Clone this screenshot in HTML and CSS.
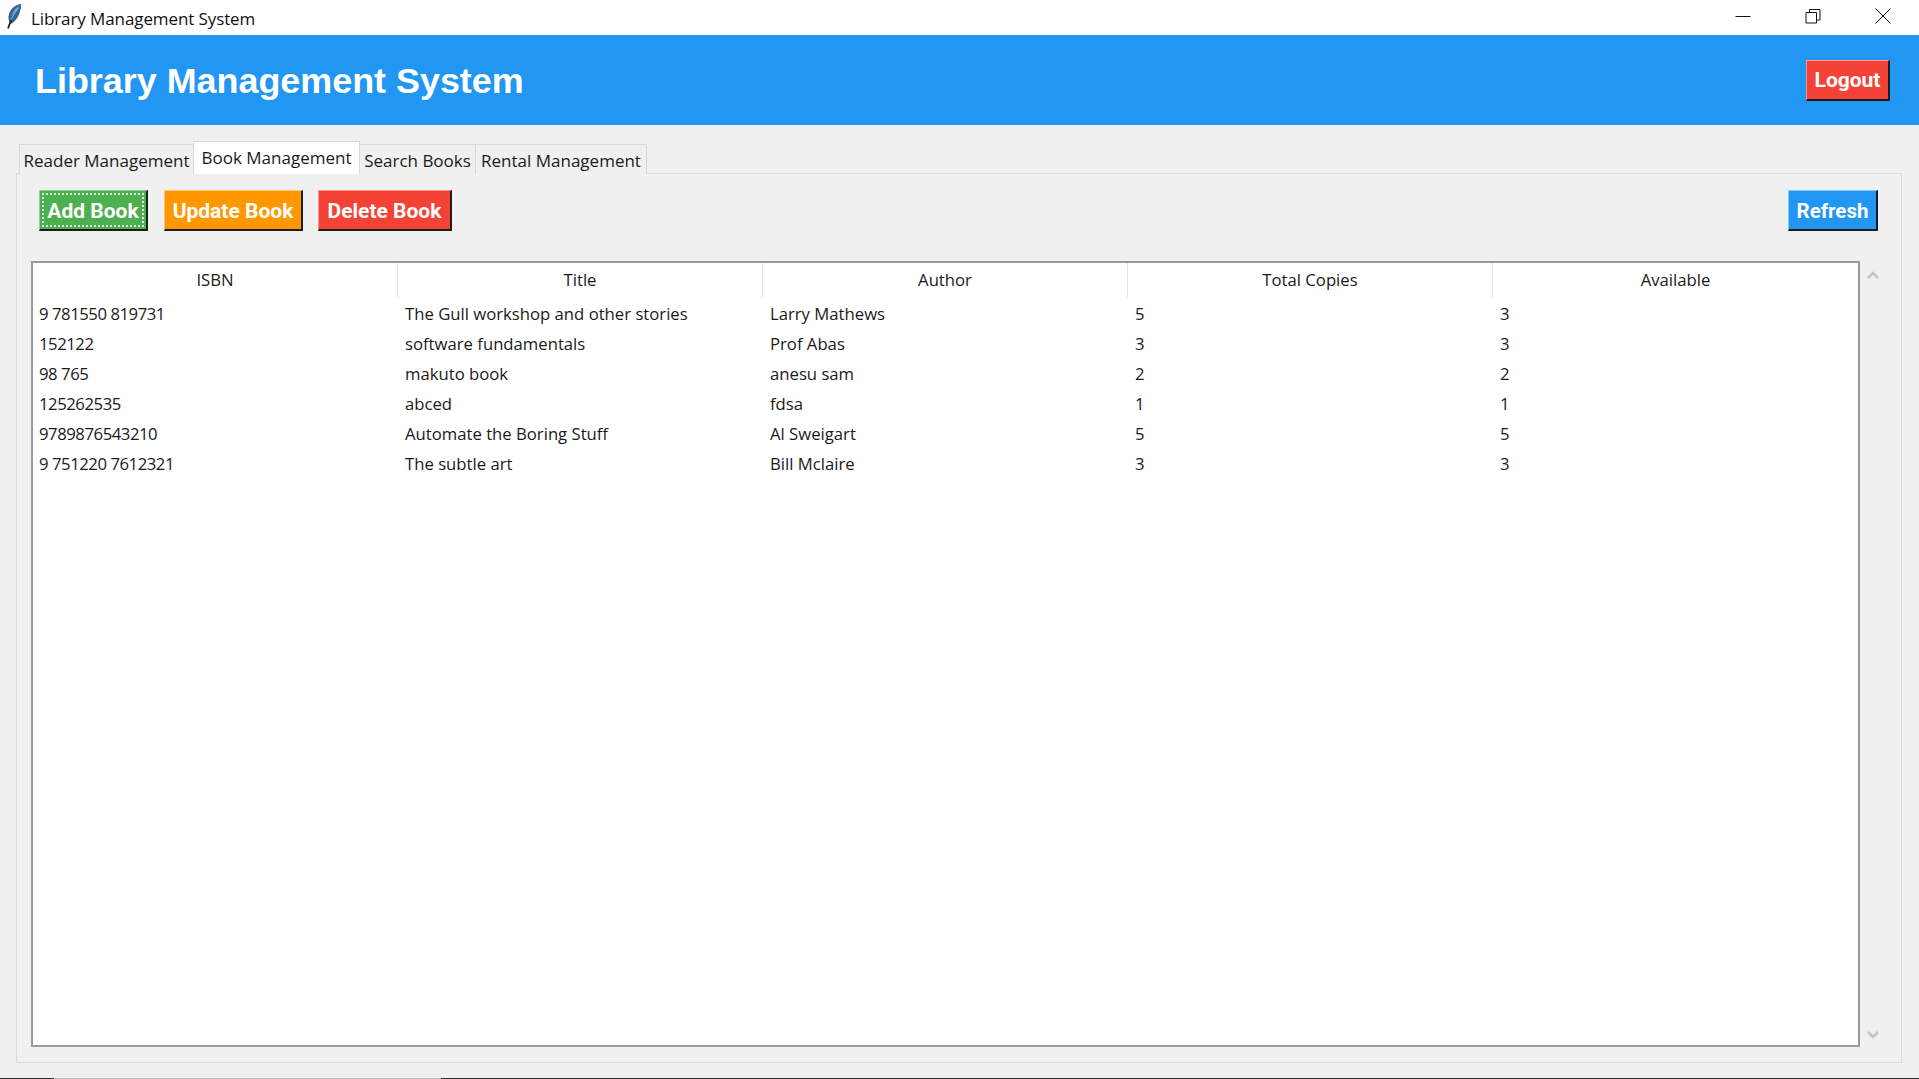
FILE: index.html
```html
<!DOCTYPE html>
<html lang="en">
<head>
<meta charset="utf-8">
<title>Library Management System</title>
<link rel="stylesheet" href="styles.css">
</head>
<body>
<div class="window">
  <div class="titlebar">
    <svg class="app-icon" viewBox="0 0 16 26" aria-hidden="true">
      <path d="M15 1 C10 1.500 5 5 3 11 C2 14.500 2.500 18 4 21 C8 20 11.500 15.500 13.500 10 C14.800 6.500 15.300 3.500 15 1 Z" fill="#34639c"/>
      <path d="M13.500 3 C12 3.500 10 5 8.500 7 C7 9 6 11 5.500 13 C8 10 11 6.500 13.500 3 Z" fill="#7ea6d2"/>
      <path d="M12.500 5 C9 9 6 14 3.500 20" fill="none" stroke="#c3d6ea" stroke-width="0.700"/>
      <path d="M5.500 17 C4 20 3 22.500 2 25.500" fill="none" stroke="#1c2430" stroke-width="1.700"/>
    </svg>
    <span class="window-title">Library Management System</span>
    <div class="window-controls">
      <svg class="win-btn" viewBox="0 0 16 16" aria-hidden="true"><path d="M0.500 8.500H15.500" stroke="#111" fill="none"/></svg>
      <svg class="win-btn" viewBox="0 0 16 16" aria-hidden="true"><path d="M1 4.500H11.500V15H1Z M4.500 4.500V1.500H15V12H11.500" stroke="#111" fill="none"/></svg>
      <svg class="win-btn" viewBox="0 0 16 16" aria-hidden="true"><path d="M0.500 0.500L15.500 15.500M15.500 0.500L0.500 15.500" stroke="#111" fill="none"/></svg>
    </div>
  </div>

  <header class="app-header">
    <h1 class="app-title">Library Management System</h1>
    <button class="btn btn-red btn-logout">Logout</button>
  </header>

  <main class="content">
    <nav class="tabs">
      <div class="tab tab-reader">Reader Management</div>
      <div class="tab tab-active">Book Management</div>
      <div class="tab tab-search">Search Books</div>
      <div class="tab tab-rental">Rental Management</div>
    </nav>
    <section class="pane">
      <div class="toolbar">
        <button class="btn btn-green btn-add"><span class="focus-ring">Add Book</span></button>
        <button class="btn btn-orange btn-update">Update Book</button>
        <button class="btn btn-red btn-delete">Delete Book</button>
        <button class="btn btn-blue btn-refresh">Refresh</button>
      </div>
      <div class="table-area">
        <div class="table">
          <div class="row head">
            <div class="cell">ISBN</div><div class="cell">Title</div><div class="cell">Author</div><div class="cell">Total Copies</div><div class="cell">Available</div>
          </div>
          <div class="row"><div class="cell">9 781550 819731</div><div class="cell">The Gull workshop and other stories</div><div class="cell">Larry Mathews</div><div class="cell">5</div><div class="cell">3</div></div>
          <div class="row"><div class="cell">152122</div><div class="cell">software fundamentals</div><div class="cell">Prof Abas</div><div class="cell">3</div><div class="cell">3</div></div>
          <div class="row"><div class="cell">98 765</div><div class="cell">makuto book</div><div class="cell">anesu sam</div><div class="cell">2</div><div class="cell">2</div></div>
          <div class="row"><div class="cell">125262535</div><div class="cell">abced</div><div class="cell">fdsa</div><div class="cell">1</div><div class="cell">1</div></div>
          <div class="row"><div class="cell">9789876543210</div><div class="cell">Automate the Boring Stuff</div><div class="cell">Al Sweigart</div><div class="cell">5</div><div class="cell">5</div></div>
          <div class="row"><div class="cell">9 751220 7612321</div><div class="cell">The subtle art</div><div class="cell">Bill Mclaire</div><div class="cell">3</div><div class="cell">3</div></div>
        </div>
        <div class="scrollbar">
          <svg class="arrow" viewBox="0 0 12 8" aria-hidden="true"><path d="M1 7L6 2L11 7" fill="none" stroke="#c4c4c4" stroke-width="2.500"/></svg>
          <svg class="arrow" viewBox="0 0 12 8" aria-hidden="true"><path d="M1 1L6 6L11 1" fill="none" stroke="#c4c4c4" stroke-width="2.500"/></svg>
        </div>
      </div>
    </section>
  </main>
  <div class="bottom-edge"><span class="edge-a"></span><span class="edge-b"></span><span class="edge-c"></span></div>
</div>
</body>
</html>
```

FILE: styles.css
```css
* { box-sizing: border-box; }
html, body { margin: 0; padding: 0; height: 100%; overflow: hidden; }
body { background: #f0f0f0; font-family: "Open Sans", "Noto Sans", sans-serif; color: #1a1a1a; }

.window { height: 1079px; display: flex; flex-direction: column; }

.titlebar { height: 35px; flex: none; background: #fff; display: flex; align-items: center; padding-left: 6px; }
.app-icon { width: 16px; height: 26px; margin-right: 9px; margin-bottom: 3px; }
.window-title { font-size: 17px; letter-spacing: -0.1px; color: #111; padding-top: 1px; }
.window-controls { margin-left: auto; display: flex; gap: 54px; padding-right: 28px; margin-bottom: 3px; }
.win-btn { width: 16px; height: 16px; display: block; }

.app-header { height: 90px; flex: none; background: #2196f3; display: flex; align-items: center; justify-content: space-between; padding: 0 29px 0 35px; }
.app-title { margin: 2px 0 0; font: bold 35.9px "Liberation Sans", Arial, sans-serif; color: #fff; }

.btn { display: flex; align-items: center; justify-content: center; height: 41px; padding: 1px 0 0; color: #fff; font: bold 21px "Roboto", "Liberation Sans", sans-serif; border-style: solid; border-width: 1px 2px 2px 1px; border-right-color: #1c1c1c; border-bottom-color: #1c1c1c; }
.btn-red { background: #f44336; border-top-color: #f8948c; border-left-color: #f8948c; }
.btn-green { background: #4caf50; border-top-color: #94cf96; border-left-color: #94cf96; }
.btn-orange { background: #ff9800; border-top-color: #ffc56f; border-left-color: #ffc56f; }
.btn-blue { background: #2196f3; border-top-color: #86c6f8; border-left-color: #86c6f8; }
.btn-logout { width: 84px; }
.btn-add { width: 109px; padding: 2px; }
.btn-update { width: 139px; margin-left: 16px; }
.btn-delete { width: 134px; margin-left: 15px; }
.btn-refresh { width: 90px; margin-left: auto; font-size: 20.5px; }
.focus-ring { flex: 1; align-self: stretch; display: flex; align-items: center; justify-content: center; border: 2px dotted #dff2e0; padding-top: 1px; }

.content { flex: 1; min-height: 0; display: flex; flex-direction: column; padding: 16px 17px 15px 16px; }

.tabs { display: flex; align-items: flex-end; height: 33px; flex: none; padding-left: 3px; margin-bottom: -1px; position: relative; z-index: 1; }
.tab { height: 30px; display: flex; align-items: center; justify-content: center; font-size: 17px; background: #f0f0f0; border: 1px solid #d9d9d9; border-bottom: none; white-space: nowrap; padding-top: 2px; }
.tab-reader { width: 174px; border-right: none; }
.tab-active { width: 167px; height: 33px; background: #fff; padding: 0 0 2px; }
.tab-search { width: 115px; border-left: none; border-right: none; }
.tab-rental { width: 172px; }

.pane { flex: 1; min-height: 0; border: 1px solid #dcdcdc; display: flex; flex-direction: column; padding: 16px 22px 15px 14px; }
.toolbar { display: flex; flex: none; padding: 0 1px 0 8px; }
.table-area { flex: 1; min-height: 0; display: flex; margin-top: 30px; }
.table { flex: 1; min-width: 0; background: #fff; border: 2px solid #9a9a9e; }
.row { display: grid; grid-template-columns: repeat(5, 1fr); height: 30px; align-items: center; font-size: 16.7px; }
.row .cell { padding-left: 7px; white-space: nowrap; }
.row:not(.head) .cell:first-child { padding-left: 6px; letter-spacing: -0.45px; }
.row.head { height: 35px; align-items: stretch; }
.row.head .cell { padding: 0 0 2px; display: flex; align-items: center; justify-content: center; border-right: 1px solid #e5e5e5; }
.row.head .cell:last-child { border-right: none; }

.scrollbar { width: 19px; flex: none; display: flex; flex-direction: column; justify-content: space-between; align-items: flex-end; padding: 10px 0 8px; }
.arrow { width: 12px; height: 8px; display: block; }

.bottom-edge { height: 1px; flex: none; display: flex; }
.edge-a { width: 54px; background: #333; }
.edge-b { width: 387px; background: #bdbdbd; }
.edge-c { flex: 1; background: #333; }
```
